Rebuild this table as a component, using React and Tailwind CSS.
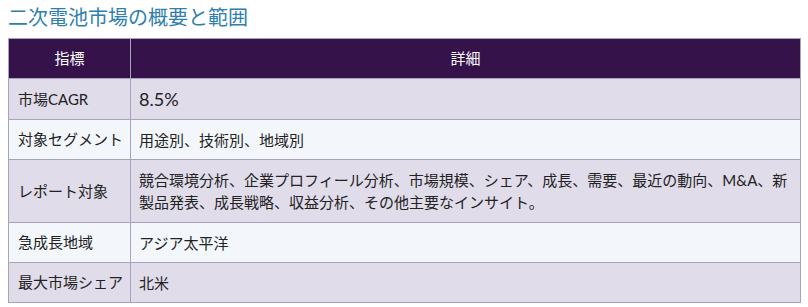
export default function App() {
  const rows = [
    ["市場CAGR", "8.5%", true],
    ["対象セグメント", "用途別、技術別、地域別"],
    ["レポート対象", "競合環境分析、企業プロフィール分析、市場規模、シェア、成長、需要、最近の動向、M&A、新製品発表、成長戦略、収益分析、その他主要なインサイト。"],
    ["急成長地域", "アジア太平洋"],
    ["最大市場シェア", "北米"],
  ];
  const heights = ["h-[41px]", "h-[40px]", "h-[63px]", "h-[40px]", "h-[40px]"];
  return (
    <div className="w-[808px] h-[307px] bg-white px-2 pt-[4px]" style={{ fontFamily: 'Lato, "Noto Sans CJK JP", sans-serif' }}>
      <h2 className="text-[20px] leading-[26px] text-[#2f7fae] font-normal mb-[8px]">二次電池市場の概要と範囲</h2>
      <table className="w-[793px] border-collapse text-[15px] text-[#222]">
        <thead>
          <tr className="h-[40px] bg-[#36124a] text-white">
            <th className="w-[122px] border border-[#a8a2bd] font-normal text-center">指標</th>
            <th className="border border-[#a8a2bd] font-normal text-center">詳細</th>
          </tr>
        </thead>
        <tbody>
          {rows.map(([k, v, big], i) => (
            <tr key={i} className={`${heights[i]} ${i % 2 === 0 ? "bg-[#e0dcea]" : "bg-[#f3f7fb]"}`}>
              <td className="border border-[#a8a2bd] pl-[9px] pr-[4px] align-middle whitespace-nowrap">{k}</td>
              <td className={`border border-[#a8a2bd] pl-[8px] pr-[8px] align-middle leading-[22px] ${big ? "text-[18px]" : ""}`}>{v}</td>
            </tr>
          ))}
        </tbody>
      </table>
    </div>
  );
}
